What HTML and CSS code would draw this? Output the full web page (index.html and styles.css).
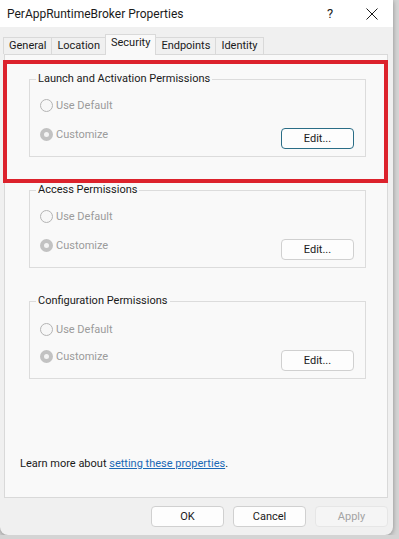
FILE: index.html
```html
<!DOCTYPE html>
<html lang="en">
<head>
  <meta charset="UTF-8">
  <meta name="viewport" content="width=device-width, initial-scale=1.0">
  <title>PerAppRuntimeBroker Properties</title>
  <link rel="stylesheet" href="styles.css">
</head>
<body>
  <div class="dialog">
    <div class="titlebar">
      <span class="title">PerAppRuntimeBroker Properties</span>
      <span class="help">?</span>
      <svg class="close" width="12" height="12" viewBox="0 0 12 12">
        <path d="M0.5 0.5 L11.5 11.5 M11.5 0.5 L0.5 11.5" stroke="#1a1a1a" stroke-width="1"/>
      </svg>
    </div>

    <div class="tabs">
      <div class="tab">General</div>
      <div class="tab">Location</div>
      <div class="tab active">Security</div>
      <div class="tab">Endpoints</div>
      <div class="tab">Identity</div>
    </div>

    <div class="panel">
      <fieldset class="group">
        <legend>Launch and Activation Permissions</legend>
        <div class="radio"><span class="dot"></span>Use Default</div>
        <div class="row">
          <div class="radio"><span class="dot checked"></span>Customize</div>
          <button class="btn focused">Edit...</button>
        </div>
      </fieldset>

      <fieldset class="group">
        <legend>Access Permissions</legend>
        <div class="radio"><span class="dot"></span>Use Default</div>
        <div class="row">
          <div class="radio"><span class="dot checked"></span>Customize</div>
          <button class="btn">Edit...</button>
        </div>
      </fieldset>

      <fieldset class="group spaced">
        <legend>Configuration Permissions</legend>
        <div class="radio"><span class="dot"></span>Use Default</div>
        <div class="row">
          <div class="radio"><span class="dot checked"></span>Customize</div>
          <button class="btn">Edit...</button>
        </div>
      </fieldset>

      <p class="learn">Learn more about <a href="#">setting these properties</a>.</p>
    </div>

    <div class="footer">
      <button class="btn">OK</button>
      <button class="btn">Cancel</button>
      <button class="btn disabled">Apply</button>
    </div>

    <div class="highlight"></div>
  </div>
</body>
</html>
```

FILE: styles.css
```css
body {
  margin: 0;
  background: #d4d4d4;
  font-family: Roboto, 'Noto Sans', sans-serif;
  font-size: 11px;
  color: #1a1a1a;
}
.dialog {
  position: relative;
  width: 393px;
  height: 535px;
  background: #f0f0f0;
  border-radius: 0 0 8px 8px;
  box-shadow: 0 1px 5px rgba(0, 0, 0, 0.35);
  overflow: hidden;
}
.titlebar {
  height: 27px;
  background: #ffffff;
  display: flex;
  align-items: center;
  padding-left: 7px;
  font-size: 12px;
}
.title {
  flex: 1;
}
.help {
  width: 12px;
  margin-right: 27px;
  font-size: 13px;
}
.close {
  margin-right: 15px;
}
.tabs {
  display: flex;
  align-items: flex-end;
  height: 27px;
  padding-left: 3px;
}
.tab {
  height: 16px;
  line-height: 16px;
  padding: 0 5px;
  border: 1px solid #d9d9d9;
  border-bottom: none;
  margin-right: -1px;
  background: #f0f0f0;
}
.tab.active {
  position: relative;
  height: 20px;
  line-height: 16px;
  margin-bottom: -1px;
  background: #f9f9f9;
  z-index: 1;
}
.panel {
  margin: 0 5px 0 4px;
  height: 444px;
  background: #f9f9f9;
  border: 1px solid #d9d9d9;
  padding: 16px 0 0 24px;
  box-sizing: border-box;
}
.group {
  width: 337px;
  margin: 0 0 25px 0;
  padding: 0 11px 7px 10px;
  border: 1px solid #dcdcdc;
  box-sizing: border-box;
}
.group legend {
  margin-left: -4px;
  padding: 0 2px;
  line-height: 16px;
}
.radio {
  display: flex;
  align-items: center;
  height: 16px;
  margin-top: 10px;
  color: #9b9b9b;
}
.dot {
  width: 11px;
  height: 11px;
  border: 1px solid #b4b4b4;
  border-radius: 50%;
  background: #f7f7f7;
  margin-right: 3px;
}
.dot.checked {
  width: 5px;
  height: 5px;
  border: 4px solid #c2c2c2;
  background: #f4f4f4;
}
.row {
  display: flex;
  justify-content: space-between;
  align-items: flex-start;
  margin-top: 13px;
}
.row .radio {
  margin-top: 0;
}
.spaced > .radio {
  margin-top: 12px;
}
.spaced .row {
  margin-top: 11px;
}
.btn {
  width: 73px;
  height: 21px;
  margin-top: 2px;
  padding: 0;
  font-family: inherit;
  font-size: 11px;
  color: #1a1a1a;
  background: #fdfdfd;
  border: 1px solid #d0d0d0;
  border-radius: 4px;
}
.btn.focused {
  border-color: #2a6d86;
}
.btn.disabled {
  color: #a3a3a3;
  background: #f5f5f5;
  border-color: #e6e6e6;
}
.learn {
  margin: 78px 0 0 -9px;
}
.learn a {
  color: #1b69b6;
}
.footer {
  display: flex;
  justify-content: flex-end;
  gap: 9px;
  padding: 8px 5px 0 0;
}
.footer .btn {
  margin-top: 0;
}
.highlight {
  position: absolute;
  left: 3px;
  top: 60px;
  width: 377px;
  height: 115px;
  border: 4px solid #dc222c;
}
```
